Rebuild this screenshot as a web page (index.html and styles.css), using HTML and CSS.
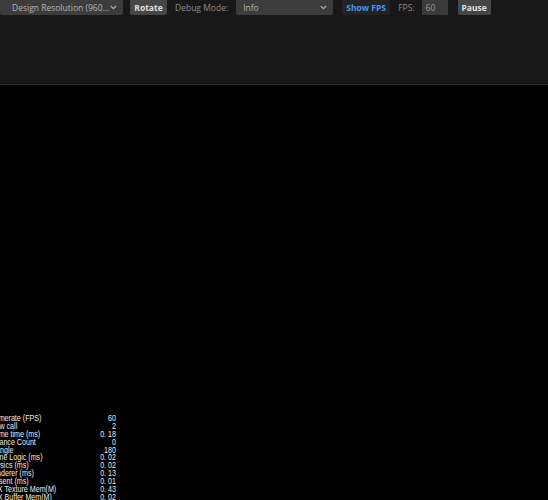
FILE: index.html
```html
<!DOCTYPE html>
<html>
<head>
<meta charset="utf-8">
<link rel="stylesheet" href="styles.css">
</head>
<body>
<div class="app">
  <div class="panel">
    <div class="toolbar">
      <div class="select sel-res"><span>Design Resolution (960...</span><svg class="chev" width="7" height="5" viewBox="0 0 7 5"><path d="M0.8 1 L3.5 3.6 L6.2 1" fill="none" stroke="#aaa" stroke-width="1.3"/></svg></div>
      <div class="btn btn-rotate">Rotate</div>
      <div class="label lbl-debug">Debug Mode:</div>
      <div class="select sel-info"><span>Info</span><svg class="chev" width="7" height="5" viewBox="0 0 7 5"><path d="M0.8 1 L3.5 3.6 L6.2 1" fill="none" stroke="#aaa" stroke-width="1.3"/></svg></div>
      <div class="btn btn-fps">Show FPS</div>
      <div class="label lbl-fps">FPS:</div>
      <div class="input">60</div>
      <div class="btn btn-pause">Pause</div>
    </div>
  </div>
  <div class="canvas">
    <div class="stats">
      <div class="row"><span>Framerate (FPS)</span><span>60</span></div>
      <div class="row"><span>Draw call</span><span>2</span></div>
      <div class="row"><span>Frame time (ms)</span><span>0. 18</span></div>
      <div class="row"><span>Instance Count</span><span>0</span></div>
      <div class="row"><span>Triangle</span><span>180</span></div>
      <div class="row"><span>Game Logic (ms)</span><span>0. 02</span></div>
      <div class="row"><span>Physics (ms)</span><span>0. 02</span></div>
      <div class="row"><span>Renderer (ms)</span><span>0. 13</span></div>
      <div class="row"><span>Present (ms)</span><span>0. 01</span></div>
      <div class="row"><span>GFX Texture Mem(M)</span><span>0. 43</span></div>
      <div class="row"><span>GFX Buffer Mem(M)</span><span>0. 02</span></div>
    </div>
  </div>
</div>
</body>
</html>
```

FILE: styles.css
```css
html, body {
  margin: 0;
  padding: 0;
  background: #000;
  width: 548px;
  height: 500px;
  overflow: hidden;
}
.app {
  display: flex;
  flex-direction: column;
  height: 500px;
}
.panel {
  height: 84px;
  background: #181818;
  border-bottom: 1px solid #2c2c2c;
  box-shadow: 0 1px 0 #0c0c0c;
  flex: none;
}
.toolbar {
  display: flex;
  align-items: center;
  height: 15px;
  font-family: "Open Sans", "DejaVu Sans", sans-serif;
  font-size: 8.5px;
}
.select {
  height: 15px;
  box-sizing: border-box;
  background: #3c3c3c;
  color: #b4b4b4;
  display: flex;
  align-items: center;
  justify-content: space-between;
  border-radius: 0 0 2px 2px;
}
.sel-res {
  width: 123px;
  padding: 0 6px 0 12px;
}
.sel-info {
  width: 97px;
  padding: 0 6px 0 7px;
  margin-left: 8px;
}
.chev { display: block; }
.btn {
  height: 15px;
  box-sizing: border-box;
  display: flex;
  align-items: center;
  justify-content: center;
  font-weight: 700;
  border-radius: 0 0 2px 2px;
}
.btn-rotate {
  width: 37px;
  margin-left: 7px;
  background: #464646;
  color: #e0e0e0;
}
.label {
  color: #8a8a8a;
}
.lbl-debug { margin-left: 8px; }
.btn-fps {
  width: 48px;
  margin-left: 9px;
  background: #232323;
  color: #3d9bff;
}
.lbl-fps { margin-left: 8px; }
.input {
  width: 26px;
  height: 15px;
  box-sizing: border-box;
  margin-left: 7px;
  padding-left: 4px;
  background: #3a3a3a;
  color: #9a9a9a;
  display: flex;
  align-items: center;
}
.btn-pause {
  width: 33px;
  margin-left: 10px;
  background: #464646;
  color: #e0e0e0;
}
.canvas {
  flex: 1;
  background: #000;
  position: relative;
  overflow: hidden;
}
.stats {
  position: absolute;
  left: -12px;
  top: 330px;
  width: 162px;
  font-family: "Liberation Sans", Arial, sans-serif;
  font-size: 9px;
  line-height: 7.9px;
  color: #ececec;
  transform: scaleX(0.79);
  transform-origin: left top;
}
.row {
  display: flex;
  justify-content: space-between;
  height: 7.9px;
  white-space: nowrap;
}
```
